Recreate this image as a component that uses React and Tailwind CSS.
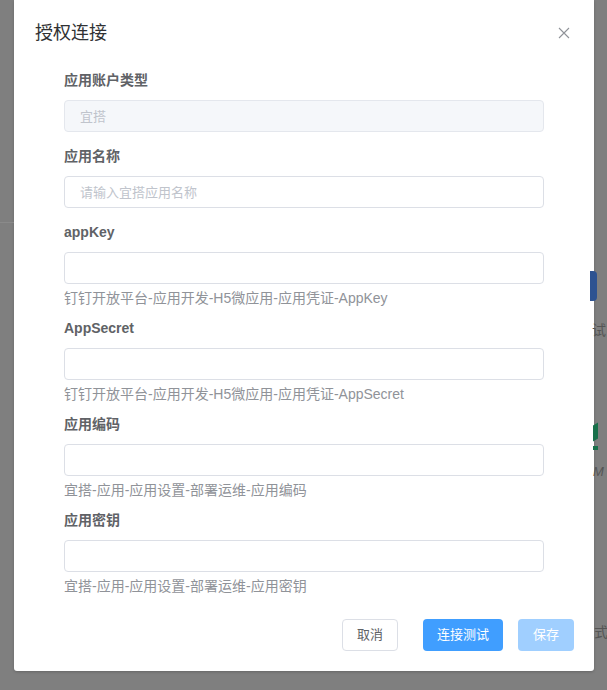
import { useState } from 'react';

const fields = [
  { label: '应用账户类型', value: '宜搭', disabled: true },
  { label: '应用名称', placeholder: '请输入宜搭应用名称' },
  { label: 'appKey', help: '钉钉开放平台-应用开发-H5微应用-应用凭证-AppKey' },
  { label: 'AppSecret', help: '钉钉开放平台-应用开发-H5微应用-应用凭证-AppSecret' },
  { label: '应用编码', help: '宜搭-应用-应用设置-部署运维-应用编码' },
  { label: '应用密钥', help: '宜搭-应用-应用设置-部署运维-应用密钥' },
];

const font = 'font-["Liberation_Sans","Noto_Sans_CJK_SC",sans-serif]';

export default function App() {
  const [values, setValues] = useState({});

  return (
    <div className={`relative h-[690px] w-[607px] overflow-hidden bg-[#7f7f7f] ${font}`}>
      {/* page behind the overlay, peeking out on the right */}
      <div className="absolute left-0 top-[222px] h-px w-[14px] bg-[#8a8a8a]" />
      <div className="absolute left-[590px] top-[271px] h-[30px] w-[7px] rounded-r bg-[#2e5391]" />
      <div className="absolute left-[592px] top-[320px] text-[14px] text-[#555]">试</div>
      <div className="absolute left-[593px] top-[424px] h-[16px] w-[5px] skew-y-[-30deg] bg-[#17704a]" />
      <div className="absolute left-[593px] top-[446px] h-[4px] w-[5px] bg-[#17704a]" />
      <div className="absolute left-[593px] top-[462px] text-[13px] italic text-[#555]">M</div>
      <div className="absolute left-[594px] top-[622px] text-[14px] text-[#555]">式</div>

      {/* dialog */}
      <div className="ml-[14px] flex h-[671px] w-[580px] flex-col rounded-b-[3px] bg-white shadow-[0_1px_3px_rgba(0,0,0,0.2)]">
        <div className="flex items-center justify-between pl-[21px] pr-[22px] pt-[22px]">
          <h2 className="text-[18px] leading-[22px] text-[#303133]">授权连接</h2>
          <button className="flex h-4 w-4 items-center justify-center text-[#909399]">
            <svg width="12" height="12" viewBox="0 0 12 12" fill="none" stroke="currentColor" strokeWidth="1.1">
              <path d="M1 1L11 11M11 1L1 11" />
            </svg>
          </button>
        </div>

        <form className="px-[50px] pt-[26px]">
          {fields.map((f, i) => {
            const prevHelp = i > 0 && fields[i - 1].help;
            return (
              <div key={f.label} className={i === 0 ? '' : prevHelp ? 'mt-[10px]' : 'mt-[14px]'}>
                <label className="block text-[14px] font-bold leading-5 text-[#606266]">{f.label}</label>
                <input
                  type="text"
                  disabled={f.disabled}
                  value={f.disabled ? '' : values[f.label] || ''}
                  placeholder={f.disabled ? f.value : f.placeholder}
                  onChange={e => setValues({ ...values, [f.label]: e.target.value })}
                  className={`mt-[10px] block h-8 w-[480px] rounded border px-[15px] text-[13px] outline-none placeholder:text-[#c0c4cc] ${
                    f.disabled ? 'border-[#e4e7ed] bg-[#f5f7fa]' : 'border-[#dcdfe6] bg-white'
                  }`}
                />
                {f.help && (
                  <div className="mt-1 text-[14px] leading-5 text-[#909399]">{f.help}</div>
                )}
              </div>
            );
          })}
        </form>

        <div className="mt-auto flex justify-end gap-[0px] pb-[20px] pr-[20px]">
          <button className="h-8 w-[56px] rounded border border-[#dcdfe6] bg-white text-[13px] text-[#606266]">
            取消
          </button>
          <button className="ml-[25px] h-8 w-[80px] rounded bg-[#409eff] text-[13px] text-white">
            连接测试
          </button>
          <button className="ml-[15px] h-8 w-[56px] rounded bg-[#a0cfff] text-[13px] text-white" disabled>
            保存
          </button>
        </div>
      </div>
    </div>
  );
}
